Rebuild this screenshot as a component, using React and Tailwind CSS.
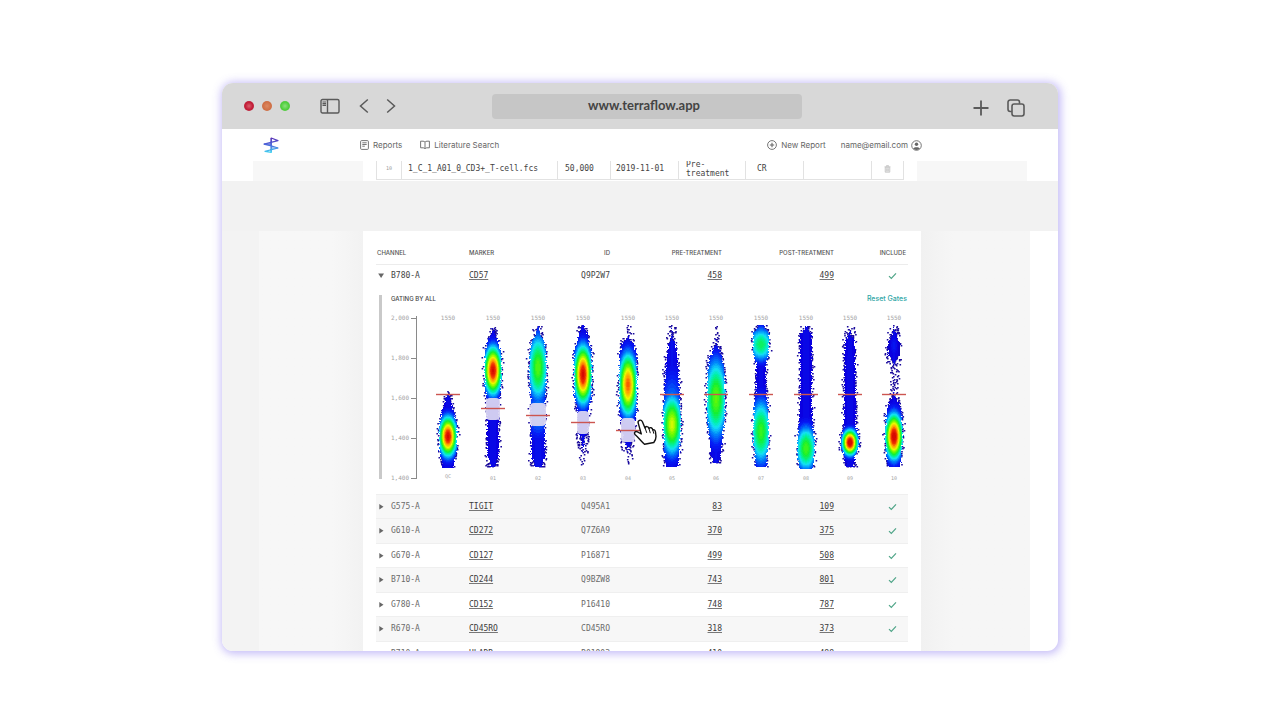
import React from "react";

const JET = [
  [0, 10, 0, 170],
  [0.06, 10, 0, 225],
  [0.14, 5, 30, 245],
  [0.24, 0, 130, 250],
  [0.33, 20, 225, 245],
  [0.4, 0, 240, 170],
  [0.5, 20, 240, 50],
  [0.6, 110, 250, 0],
  [0.7, 235, 250, 0],
  [0.82, 255, 160, 0],
  [0.92, 240, 50, 0],
  [1, 215, 10, 0],
];

function jet(v) {
  const t = Math.min(1, Math.max(0, v));
  for (let i = 1; i < JET.length; i++) {
    if (t <= JET[i][0]) {
      const a = JET[i - 1];
      const b = JET[i];
      const f = (t - a[0]) / (b[0] - a[0]);
      const c = [1, 2, 3].map((k) => Math.round(a[k] + (b[k] - a[k]) * f));
      return `rgb(${c[0]},${c[1]},${c[2]})`;
    }
  }
  return "rgb(215,10,0)";
}

// shape: [y, half width, fill]; blobs: [centre y, rx, ry, peak]
const SAMPLES = [
  { name: "QC", top: "1550", x: 448, gate: 394, base: 0.09, shape: [[391, 1, 0.5], [396, 3, 0.8], [404, 4, 1], [414, 7, 1], [424, 9, 1], [450, 9, 1], [462, 6, 1], [468, 6, 1]], blobs: [[436, 9, 20, 1]] },
  { name: "01", top: "1550", x: 493, gate: 408, handle: [398, 420, 6], base: 0.09, shape: [[325, 1, 0.4], [332, 3, 0.8], [340, 5, 1], [350, 8, 1], [370, 9, 1], [388, 8, 1], [400, 6, 1], [420, 6, 1], [455, 6, 1], [467, 5, 0.7]], blobs: [[370, 9, 24, 1]] },
  { name: "02", top: "1550", x: 538, gate: 415, handle: [403, 426, 7], base: 0.11, shape: [[325, 3, 0.5], [332, 4, 0.8], [340, 6, 1], [350, 8, 1], [370, 9, 1], [390, 8, 1], [404, 7, 1], [455, 7, 1], [467, 6, 0.8]], blobs: [[367, 8, 26, 0.57], [412, 14, 30, 0.25]] },
  { name: "03", top: "1550", x: 583, gate: 422, handle: [411, 434, 5], base: 0.09, shape: [[325, 4, 0.6], [332, 4, 1], [342, 6, 1], [352, 9, 1], [395, 9, 1], [408, 6, 1], [432, 5, 1], [436, 5, 0.7], [448, 4, 0.5], [466, 3, 0.15]], blobs: [[374, 9, 29, 1]] },
  { name: "04", top: "1550", x: 628, gate: 430, handle: [418, 442, 6], base: 0.09, shape: [[325, 4, 0.25], [336, 4, 0.5], [343, 6, 1], [355, 9, 1], [408, 9, 1], [420, 7, 1], [440, 6, 0.9], [446, 5, 0.6], [464, 2, 0.15]], blobs: [[384, 9, 30, 0.88]] },
  { name: "05", top: "1550", x: 672, gate: 394, base: 0.1, shape: [[325, 3, 0.4], [336, 3, 0.6], [345, 4, 1], [360, 6, 1], [375, 7, 1], [395, 8, 1], [424, 9, 1], [450, 8, 1], [467, 6, 1]], blobs: [[424, 9, 26, 0.68], [410, 14, 46, 0.25]] },
  { name: "06", top: "1550", x: 716, gate: 394, base: 0.1, shape: [[325, 2, 0.3], [342, 3, 0.5], [350, 5, 0.9], [360, 7, 1], [375, 9, 1], [415, 9, 1], [435, 7, 1], [455, 5, 1], [463, 5, 0.8]], blobs: [[398, 9, 31, 0.58]] },
  { name: "07", top: "1550", x: 761, gate: 394, base: 0.09, shape: [[325, 5, 0.8], [332, 8, 1], [352, 8, 1], [364, 5, 1], [388, 5, 1], [404, 7, 1], [440, 8, 1], [456, 6, 1], [467, 6, 1]], blobs: [[344, 8, 11, 0.47], [431, 8, 24, 0.54]] },
  { name: "08", top: "1550", x: 806, gate: 394, base: 0.09, shape: [[326, 4, 0.6], [334, 6, 1], [400, 6, 1], [425, 7, 1], [440, 9, 1], [460, 8, 1], [469, 7, 1]], blobs: [[448, 8, 17, 0.55]] },
  { name: "09", top: "1550", x: 850, gate: 394, base: 0.09, shape: [[326, 4, 0.4], [335, 5, 0.6], [340, 5, 1], [400, 6, 1], [425, 6, 1], [435, 9, 1], [448, 9, 1], [456, 5, 1], [467, 6, 0.9]], blobs: [[442, 8, 13, 1.05]] },
  { name: "10", top: "1550", x: 894, gate: 394, base: 0.08, shape: [[325, 3, 0.4], [335, 5, 0.8], [342, 6, 1], [354, 6, 1], [364, 6, 0.5], [374, 5, 0.3], [394, 4, 0.5], [402, 5, 1], [414, 8, 1], [436, 9, 1], [450, 8, 1], [460, 7, 1], [467, 6, 1]], blobs: [[436, 9, 23, 1.03], [345, 5, 12, 0.12]] },
];

function envelope(shape, y) {
  for (let i = 1; i < shape.length; i++) {
    if (y <= shape[i][0]) {
      const a = shape[i - 1];
      const b = shape[i];
      const f = (y - a[0]) / (b[0] - a[0]);
      return [a[1] + (b[1] - a[1]) * f, a[2] + (b[2] - a[2]) * f];
    }
  }
  return [0, 0];
}

function buildPaths() {
  let seed = 20191101;
  const rnd = () => {
    seed = (seed * 1664525 + 1013904223) % 4294967296;
    return seed / 4294967296;
  };
  const layers = {};
  let dots = "";
  SAMPLES.forEach((s) => {
    const y0 = s.shape[0][0];
    const y1 = s.shape[s.shape.length - 1][0];
    for (let y = y0; y < y1; y++) {
      const [hw, fill] = envelope(s.shape, y);
      const core = fill < 0.95 ? hw * (fill - 0.45) * 1.6 : hw;
      for (let dx = -11; dx < 11; dx++) {
        const edge = core + (rnd() - 0.6) * 2;
        if (Math.abs(dx + 0.5) > edge) continue;
        let v = s.base - (0.05 * Math.abs(dx + 0.5)) / (hw + 1);
        s.blobs.forEach(([cy, rx, ry, peak]) => {
          const r2 = ((dx + 0.5) / rx) ** 2 + ((y - cy) / ry) ** 2;
          const k = peak > 0.4 ? Math.log(peak / 0.31) : 1.1;
          v = Math.max(v, peak * Math.exp(-k * r2));
        });
        const q = Math.round(v * 50) / 50;
        layers[q] = (layers[q] || "") + `M${s.x + dx} ${y}h1v1h-1z`;
      }
      const count = fill < 0.95 ? Math.ceil(hw * fill * 0.8) : 0;
      for (let i = 0; i < count; i++) {
        if (rnd() > fill + 0.25) continue;
        const x = s.x + (rnd() + rnd() - 1) * (hw + 1);
        dots += `M${x.toFixed(1)} ${y}h1.6v1.6h-1.6z`;
      }
      if (rnd() < 0.6 && fill > 0.5) {
        const side = rnd() < 0.5 ? -1 : 1;
        const x = s.x - 0.8 + side * (hw + rnd() * rnd() * 3);
        dots += `M${x.toFixed(1)} ${y}h1.6v1.6h-1.6z`;
      }
    }
  });
  return { layers, dots };
}

const { layers, dots } = buildPaths();

const TICKS = [
  [318, "2,000"],
  [358, "1,800"],
  [398, "1,600"],
  [438, "1,400"],
  [478, "1,400"],
];

function Plot() {
  return (
    <svg viewBox="382 303 526 176" className="block w-full overflow-visible" role="img" aria-label="Gating plot">
      <path d="M416.500 316V479" stroke="#8a8a8a" fill="none" />
      {TICKS.map(([y, label], i) => (
        <g key={i}>
          <path d={`M411 ${y + 0.5}h6`} stroke="#8a8a8a" />
          <text x="409" y={y + 2} textAnchor="end" className="fill-[#a3a3a3] font-['DejaVu_Sans_Mono',monospace] text-[6px]">{label}</text>
        </g>
      ))}
      <path d={dots} fill="#1a0a9c" />
      {Object.entries(layers).map(([q, d]) => (
        <path key={q} d={d} fill={jet(Number(q))} shapeRendering="crispEdges" />
      ))}
      {SAMPLES.map((s) => (
        <g key={s.name}>
          {s.handle && (
            <rect x={s.x - s.handle[2] - 1} y={s.handle[0]} width={s.handle[2] * 2 + 2} height={s.handle[1] - s.handle[0]} rx="4" fill="#d9d5f1" fillOpacity="0.95" />
          )}
          <path d={`M${s.x - 12} ${s.gate + 0.5}h24`} stroke="#cc5550" strokeWidth="1.400" />
          <text x={s.x} y="320" textAnchor="middle" className="fill-[#a3a3a3] font-['DejaVu_Sans_Mono',monospace] text-[6px]">{s.top}</text>
          <text x={s.x} y={s.name === "QC" ? 478 : 480} textAnchor="middle" className="fill-[#a3a3a3] font-['DejaVu_Sans_Mono',monospace] text-[5px]">{s.name}</text>
        </g>
      ))}
      <path
        d="M638.300 423.400C637.200 420.300 641 418.800 642.400 421.800L645 428C645.600 426 648.600 426 649 428.600C650 427 652.400 427.400 652.800 430C654 429.200 655.200 430 655.500 432L656 436.500C656 439 655 441 653.800 442.500L644.500 444.200C641.500 441.500 638 437 635 434.500C633.500 432.500 635.500 430.800 637.500 431.800L641.300 434Z"
        fill="#fff" stroke="#111" strokeWidth="1.400" strokeLinejoin="round"
      />
      <path d="M645.200 428.300l1.400 4.200M649.100 429l1.100 3.800M652.900 430.300l.8 3" stroke="#111" fill="none" strokeLinecap="round" />
    </svg>
  );
}

const OPEN_ROW = ["B780-A", "CD57", "Q9P2W7", 458, 499];

const ROWS = [
  ["G575-A", "TIGIT", "Q495A1", 83, 109],
  ["G610-A", "CD272", "Q7Z6A9", 370, 375],
  ["G670-A", "CD127", "P16871", 499, 508],
  ["B710-A", "CD244", "Q9BZW8", 743, 801],
  ["G780-A", "CD152", "P16410", 748, 787],
  ["R670-A", "CD45RO", "CD45RO", 318, 373],
  ["R710-A", "HLADR", "P01903", 410, 488],
];

const ROW_STYLES = [
  "h-6 bg-[#f7f7f7]",
  "h-[25px] bg-[#f7f7f7]",
  "h-6",
  "h-[25px] bg-[#f7f7f7]",
  "h-6",
  "h-[25px] bg-[#f7f7f7]",
  "h-6",
];

function Check() {
  return (
    <svg viewBox="0 0 9 8" className="mr-[11px] ml-auto block h-2 w-[9px]" fill="none" stroke="#4fa588" strokeWidth="1.200" role="img" aria-label="Included">
      <path d="M1 4.200L3.300 6.500L8 1.300" />
    </svg>
  );
}

function ValueLink({ children }) {
  return (
    <a href="#events" className="text-[#3c3c3c] underline decoration-[#777] underline-offset-1">
      {children}
    </a>
  );
}

function DataRow({ row, open, className }) {
  const [channel, marker, id, pre, post] = row;
  return (
    <tr className={className}>
      <td className="p-0">
        <button className="flex items-center" aria-expanded={!!open}>
          <svg viewBox="0 0 8 8" className="mr-1.5 ml-px h-2 w-2" fill="#666">
            {open ? <path d="M1.200 1.500h5.800L4.100 6z" /> : <path d="M2.300 1v5.400l4.200-2.700z" />}
          </svg>
          {channel}
        </button>
      </td>
      <td className="p-0"><ValueLink>{marker}</ValueLink></td>
      <td className="p-0 text-right">{id}</td>
      <td className="p-0 text-right"><ValueLink>{pre}</ValueLink></td>
      <td className="p-0 text-right"><ValueLink>{post}</ValueLink></td>
      <td className="p-0"><Check /></td>
    </tr>
  );
}

function MarkerTable() {
  return (
    <table className="w-full table-fixed font-['DejaVu_Sans_Mono',monospace] text-[8px] leading-3 text-[#6b6b6b]">
      <colgroup>
        <col />
        <col className="w-[70px]" />
        <col className="w-[71px]" />
        <col className="w-[112px]" />
        <col className="w-[112px]" />
        <col className="w-[74px]" />
      </colgroup>
      <thead>
        <tr className="h-[21px] border-b border-[#ececec] font-['Inter',sans-serif] text-[6px] text-[#555]">
          <th className="p-0 pl-px text-left font-medium">CHANNEL</th>
          <th className="p-0 text-left font-medium">MARKER</th>
          <th className="p-0 text-right font-medium">ID</th>
          <th className="p-0 text-right font-medium">PRE-TREATMENT</th>
          <th className="p-0 text-right font-medium">POST-TREATMENT</th>
          <th className="p-0 pr-0.5 text-right font-medium">INCLUDE</th>
        </tr>
      </thead>
      <tbody>
        <DataRow row={OPEN_ROW} open className="h-6 text-[#444]" />
        <tr>
          <td colSpan={6} className="px-0 pt-[7px] pb-[15px]">
            <div className="ml-[3px] border-l-[3px] border-[#c9c9c9]">
              <div className="flex h-2 items-center justify-between pr-px pl-[9px] font-['Inter',sans-serif]">
                <h2 className="text-[6px] font-medium text-[#444]">GATING BY ALL</h2>
                <button className="text-[7px] font-medium text-[#2fa6a6]">Reset Gates</button>
              </div>
              <Plot />
            </div>
          </td>
        </tr>
        {ROWS.map((row, i) => (
          <DataRow key={row[0]} row={row} className={`border-t border-[#efefef] ${ROW_STYLES[i]}`} />
        ))}
      </tbody>
    </table>
  );
}

function FileTable() {
  return (
    <table className="w-full table-fixed font-['DejaVu_Sans_Mono',monospace] text-[8px] leading-[9px] text-[#444]">
      <colgroup>
        <col className="w-[25px]" />
        <col />
        <col className="w-[53px]" />
        <col className="w-[68px]" />
        <col className="w-[67px]" />
        <col className="w-[58px]" />
        <col className="w-[68px]" />
        <col className="w-8" />
      </colgroup>
      <tbody>
        <tr className="h-[22px]">
          <td className="border border-[#e2e2e2] p-0 text-center text-[5px] text-[#999]">10</td>
          <td className="border border-[#e2e2e2] p-0 pl-1.5">1_C_1_A01_0_CD3+_T-cell.fcs</td>
          <td className="border border-[#e2e2e2] p-0 pl-[7px]">50,000</td>
          <td className="border border-[#e2e2e2] p-0 pl-[5px]">2019-11-01</td>
          <td className="border border-[#e2e2e2] p-0 pl-[7px]">Pre-<br />treatment</td>
          <td className="border border-[#e2e2e2] p-0 pl-[11px]">CR</td>
          <td className="border border-[#e2e2e2] p-0" />
          <td className="border border-[#e2e2e2] p-0">
            <button aria-label="Delete" className="mx-auto block">
              <svg viewBox="0 0 7 8" className="block h-2 w-[7px]" fill="#e4e4e4" stroke="#c4c4c4" strokeWidth=".8">
                <path d="M1.200 2.200h4.600v5H1.200zM.5 1.800h6M2.500 1.500V.6h2v.9M2.800 3.500v2.500M4.200 3.500v2.500" />
              </svg>
            </button>
          </td>
        </tr>
      </tbody>
    </table>
  );
}

function Toolbar() {
  return (
    <header className="flex h-[46px] shrink-0 items-center bg-[#d8d8d8] pr-[33px] pl-[22px] text-[#5a5a5a]">
      <div className="flex gap-2">
        <span className="h-2.5 w-2.5 rounded-full bg-[radial-gradient(circle,#d8606c_0%,#c4203a_50%,#b3243a_100%)]" />
        <span className="h-2.5 w-2.5 rounded-full bg-[radial-gradient(circle,#dd8a62_0%,#cf6f45_60%,#c87650_100%)]" />
        <span className="h-2.5 w-2.5 rounded-full bg-[radial-gradient(circle,#8be07c_0%,#4fce3c_55%,#5ac84a_100%)]" />
      </div>
      <button aria-label="Sidebar" className="ml-[30px]">
        <svg viewBox="0 0 20 16" className="block h-4 w-5" fill="none" stroke="currentColor" strokeWidth="1.400">
          <rect x="1" y="1.500" width="18" height="13.500" rx="1.500" />
          <path d="M7.500 1.500v13.500" />
          <path d="M2.500 4h3.500M2.500 5.700h3.500M2.500 7.400h3.500" strokeWidth="1.200" />
        </svg>
      </button>
      <button aria-label="Back" className="ml-[19px]">
        <svg viewBox="0 0 10 16" className="block h-4 w-2.5" fill="none" stroke="currentColor" strokeWidth="1.500"><path d="M8.800 1.500L1.500 8l7.300 6.500" /></svg>
      </button>
      <button aria-label="Forward" className="ml-[17px]">
        <svg viewBox="0 0 10 16" className="block h-4 w-2.5" fill="none" stroke="currentColor" strokeWidth="1.500"><path d="M1.200 1.500L8.500 8l-7.300 6.500" /></svg>
      </button>
      <input
        aria-label="Address"
        readOnly
        defaultValue="www.terraflow.app"
        className="mr-[171px] ml-24 h-[25px] min-w-0 flex-1 rounded bg-[#c6c6c6] pr-1.5 pb-[3px] text-center font-['Lato',sans-serif] text-[13px] font-bold text-[#444] outline-none"
      />
      <button aria-label="New tab">
        <svg viewBox="0 0 16 16" className="mt-1 block h-4 w-4" fill="none" stroke="currentColor" strokeWidth="1.800"><path d="M8 .5v15M.5 8h15" /></svg>
      </button>
      <button aria-label="Tabs" className="ml-[18px]">
        <svg viewBox="0 0 18 18" className="mt-1 block h-[18px] w-[18px]" fill="none" stroke="currentColor" strokeWidth="1.600">
          <rect x="5" y="5" width="12" height="12" rx="2.200" />
          <path d="M4.800 12.500H3.200A2.200 2.200 0 0 1 1 10.300V3.200A2.200 2.200 0 0 1 3.200 1h7.100a2.200 2.200 0 0 1 2.200 2.200v1.600" />
        </svg>
      </button>
    </header>
  );
}

function Logo() {
  return (
    <svg viewBox="0 0 16 16" className="block h-4 w-4" fill="none" strokeWidth="1.200" strokeLinejoin="round">
      <defs>
        <linearGradient id="logo" x1="0" y1="0" x2="0" y2="16" gradientUnits="userSpaceOnUse">
          <stop offset="0" stopColor="#5b2ab0" />
          <stop offset=".5" stopColor="#4a68dc" />
          <stop offset="1" stopColor="#3fd8f2" />
        </linearGradient>
      </defs>
      <g stroke="url(#logo)">
        <path d="M8.200 1l6.800 2.600L1 7.200l7.200 1.600L15 11 2 14.300l6.200 1z" />
        <path d="M8.200 1v14.300M1 7.200h7.200M15 11H8.200" />
      </g>
    </svg>
  );
}

function Nav() {
  return (
    <nav className="flex h-8 shrink-0 items-center bg-white pr-[136px] pl-[41px] font-['Inter',sans-serif] text-[8px] leading-3 text-[#666]">
      <a href="#home" aria-label="Home"><Logo /></a>
      <a href="#reports" className="ml-[81px] flex items-center gap-1">
        <svg viewBox="0 0 9 10" className="block h-2.5 w-[9px]" fill="none" stroke="currentColor" strokeWidth=".9">
          <rect x=".6" y=".6" width="7.800" height="8.800" rx="1" />
          <path d="M2.300 2.800h4.400M2.300 4.500h4.400M2.300 6.200h2.500" />
        </svg>
        Reports
      </a>
      <a href="#literature" className="ml-[18px] flex items-center gap-1">
        <svg viewBox="0 0 10 10" className="block h-2.5 w-2.5" fill="none" stroke="currentColor" strokeWidth=".9" strokeLinejoin="round">
          <path d="M5 2.200C4.500 1.400 3.800 1.200 3 1.200H.6v6.600h2.600c.9 0 1.500.3 1.800 1 .3-.7.900-1 1.800-1h2.600V1.200H7c-.8 0-1.500.2-2 1zV8.600" />
        </svg>
        Literature Search
      </a>
      <a href="#new" className="ml-auto flex items-center gap-1">
        <svg viewBox="0 0 10 10" className="block h-2.5 w-2.5" fill="none" stroke="currentColor" strokeWidth=".9">
          <circle cx="5" cy="5" r="4.400" />
          <path d="M5 2.800v4.400M2.800 5h4.400" strokeWidth="1.100" />
        </svg>
        New Report
      </a>
      <a href="#account" className="ml-[15px] flex items-center gap-[3px]">
        name@email.com
        <svg viewBox="0 0 11 11" className="block h-[11px] w-[11px]" fill="none" stroke="currentColor">
          <circle cx="5.500" cy="5.500" r="4.800" strokeWidth=".9" />
          <circle cx="5.500" cy="4.300" r="1.700" fill="currentColor" stroke="none" />
          <path d="M2.200 8.300c1-1.500 5.600-1.500 6.600 0-1.500 2.300-5.100 2.300-6.600 0z" fill="currentColor" stroke="none" />
        </svg>
      </a>
    </nav>
  );
}

export default function App() {
  return (
    <main className="flex h-screen bg-white px-[222px] pt-[83px] pb-[69px]">
      <div className="flex min-w-0 flex-1 flex-col overflow-hidden rounded-[11px] bg-white shadow-[1px_1px_8px_2px_rgba(118,98,235,0.42)]">
        <Toolbar />
        <Nav />
        <div className="grid h-5 shrink-0 grid-cols-[31px_110px_1fr_110px_31px]">
          <div />
          <div className="bg-[#f7f7f7]" />
          <div className="flex flex-col justify-end overflow-hidden px-[13px] pb-px">
            <FileTable />
          </div>
          <div className="bg-[#f7f7f7]" />
          <div />
        </div>
        <div className="h-[50px] shrink-0 bg-[#f2f2f2]" />
        <div className="grid min-h-0 flex-1 grid-cols-[37px_104px_1fr_109px_28px]">
          <div className="bg-[#f3f3f3]" />
          <div className="bg-linear-to-r from-[#f7f7f7] from-70% to-[#f2f2f2]" />
          <section className="min-h-0 overflow-hidden bg-white px-[13px] pt-3">
            <MarkerTable />
          </section>
          <div className="bg-linear-to-r from-[#f1f1f1] to-[#f6f6f6] to-30%" />
          <div />
        </div>
      </div>
    </main>
  );
}
